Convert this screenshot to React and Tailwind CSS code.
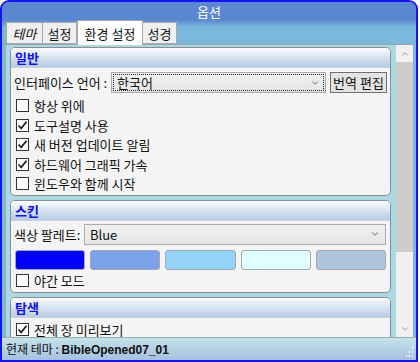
import { ChevronDown, ChevronUp } from 'lucide-react'

const Check = ({ checked, label }) => (
  <div className="flex items-center h-[19.5px] pl-[5px] gap-[5px]">
    <div className="w-[13px] h-[13px] border border-[#333333] bg-white flex items-center justify-center">
      {checked && (
        <svg width="11" height="11" viewBox="0 0 11 11">
          <path d="M1.5 5.5 L4.2 8.3 L9.5 1.8" fill="none" stroke="#222" strokeWidth="1.8" />
        </svg>
      )}
    </div>
    <span className="text-[13px] leading-none text-[#111]">{label}</span>
  </div>
)

const Group = ({ title, children, className = '' }) => (
  <div className={`w-[381px] shrink-0 rounded-[5px] border border-[#8a8f96] bg-[#f4f4f4] overflow-hidden ${className}`}>
    <div className="h-[20px] flex items-center pl-[4px] bg-gradient-to-b from-[#fbfcfe] to-[#b6cbe4] border-b border-[#c8d4e2]">
      <span className="text-[13px] font-bold leading-none text-[#1010e8]">{title}</span>
    </div>
    {children}
  </div>
)

const Select = ({ value, width, focused }) => (
  <div className={`${width} h-[21px] border border-[#acacac] bg-gradient-to-b from-[#f0f0f0] to-[#e5e5e5] p-[1px]`}>
    <div className={`h-full flex items-center justify-between pl-[3px] pr-[3px] ${focused ? 'border border-dotted border-[#222]' : 'border border-transparent'}`}>
      <span className="text-[13px] leading-none text-[#111]">{value}</span>
      <ChevronDown className="w-[10px] h-[10px] text-[#555]" strokeWidth={2} />
    </div>
  </div>
)

const swatches = ['bg-[#0000ff]', 'bg-[#7aa3ea]', 'bg-[#94d4f8]', 'bg-[#e0ffff]', 'bg-[#b0c4de]']

export default function App() {
  return (
    <div className="w-[420px] h-[362px] bg-white font-['Noto_Sans_CJK_KR','Noto_Sans',sans-serif]">
      <div className="w-[418px] h-[362px] border-2 border-[#1414f0] rounded-t-[9px] overflow-hidden flex flex-col bg-[#7ab8dc]">
        <div className="h-[18px] shrink-0 bg-[#5b87d0] flex items-center justify-center">
          <span className="text-[13px] leading-none text-white">옵션</span>
        </div>

        <div className="h-[24px] shrink-0 flex items-end pl-[4px] bg-[linear-gradient(to_bottom,#5c88d0_0px,#7ab8dc_7px)]">
          <div className="w-[37px] h-[22px] border border-[#a8a8a8] bg-[#f0f0f0] flex items-center justify-center">
            <span className="text-[13px] italic leading-none text-[#111]">테마</span>
          </div>
          <div className="w-[34px] h-[22px] border border-l-0 border-[#a8a8a8] bg-[#f0f0f0] flex items-center justify-center">
            <span className="text-[13px] leading-none text-[#111]">설정</span>
          </div>
          <div className="w-[66px] h-[25px] -mb-px relative z-10 border border-b-0 border-[#a8a8a8] bg-white flex items-center justify-center">
            <span className="text-[13px] leading-none text-[#111]">환경 설정</span>
          </div>
          <div className="w-[34px] h-[22px] border border-l-0 border-[#a8a8a8] bg-[#f0f0f0] flex items-center justify-center">
            <span className="text-[13px] leading-none text-[#111]">성경</span>
          </div>
        </div>

        <div className="h-[293px] shrink-0 ml-[3px] mr-[3px] border-l border-t border-[#9aa4ae] bg-[#acd8e2] flex">
          <div className="w-[390px] overflow-hidden pl-[4px] pt-[2px] flex flex-col gap-[4px]">
            <Group title="일반">
              <div className="pt-[4px] pl-[3px] flex items-center">
                <span className="w-[97px] text-[13px] leading-none text-[#111] whitespace-nowrap">인터페이스 언어 :</span>
                <Select value="한국어" width="w-[215px]" focused />
                <div className="ml-[4px] w-[57px] h-[21px] border border-[#707070] bg-[#e4e4e4] flex items-center justify-center">
                  <span className="text-[13px] leading-none text-[#111] whitespace-nowrap">번역 편집</span>
                </div>
              </div>
              <div className="pt-[3px] pb-[1px]">
                <Check label="항상 위에" />
                <Check checked label="도구설명 사용" />
                <Check checked label="새 버전 업데이트 알림" />
                <Check checked label="하드웨어 그래픽 가속" />
                <Check label="윈도우와 함께 시작" />
              </div>
            </Group>

            <Group title="스킨">
              <div className="pt-[3px] pl-[3px] flex items-center">
                <span className="w-[70px] text-[13px] leading-none text-[#111] whitespace-nowrap">색상 팔레트:</span>
                <Select value="Blue" width="w-[302px]" />
              </div>
              <div className="mt-[5px] pl-[4px] pr-[4px] flex gap-[5px]">
                {swatches.map((c) => (
                  <div key={c} className={`flex-1 h-[20px] rounded-[3px] border border-[#a0a8b4] ${c}`} />
                ))}
              </div>
              <div className="pt-[1px] pb-[2px]">
                <Check label="야간 모드" />
              </div>
            </Group>

            <Group title="탐색" className="h-[60px]">
              <div className="pt-[2px]">
                <Check checked label="전체 장 미리보기" />
              </div>
            </Group>
          </div>

          <div className="ml-[1px] w-[17px] h-full bg-[#f0f0f0] flex flex-col">
            <div className="h-[17px] flex items-center justify-center">
              <ChevronUp className="w-[10px] h-[10px] text-[#8a8a8a]" strokeWidth={2} />
            </div>
            <div className="h-[190px] bg-[#cdcdcd]" />
            <div className="flex-1" />
            <div className="h-[17px] flex items-center justify-center">
              <ChevronDown className="w-[10px] h-[10px] text-[#8a8a8a]" strokeWidth={2} />
            </div>
          </div>
        </div>

        <div className="flex-1 border-t border-[#9aa8b0] bg-gradient-to-b from-[#c6e2ea] to-[#a6c0df] flex items-center justify-between pl-[4px] pr-[2px]">
          <span className="text-[12px] leading-none text-[#111]">
            현재 테마 : <span className="font-bold font-['Liberation_Sans',sans-serif]">BibleOpened07_01</span>
          </span>
          <svg width="10" height="12" viewBox="0 0 10 12" className="self-end mb-[2px]">
            <rect x="8" y="1" width="1" height="2" fill="#fff" />
            <rect x="8" y="5" width="1" height="2" fill="#fff" />
            <rect x="8" y="9" width="1" height="2" fill="#fff" />
            <rect x="5" y="5" width="1" height="2" fill="#fff" />
            <rect x="5" y="9" width="1" height="2" fill="#fff" />
            <rect x="2" y="9" width="1" height="2" fill="#fff" />
          </svg>
        </div>
      </div>
    </div>
  )
}
